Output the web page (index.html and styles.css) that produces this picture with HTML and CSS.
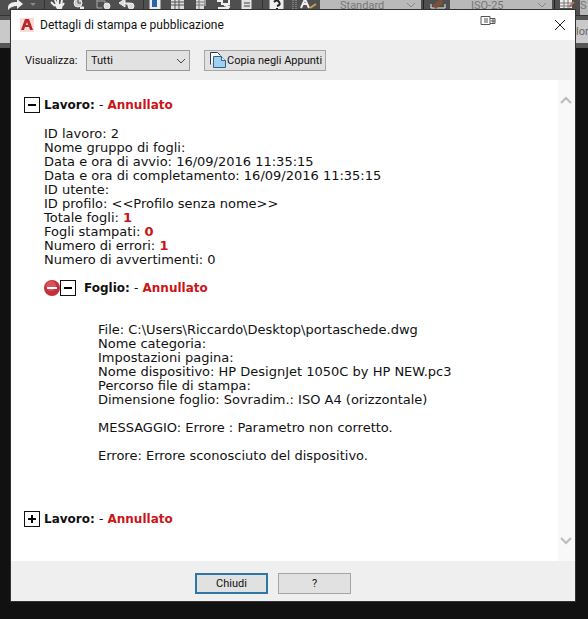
FILE: index.html
```
<!DOCTYPE html>
<html lang="it">
<head>
<meta charset="UTF-8">
<meta name="viewport" content="width=device-width, initial-scale=1.0">
<title>Dettagli di stampa e pubblicazione</title>
<link rel="stylesheet" href="styles.css">
</head>
<body>

<!-- CAD toolbars behind the dialog -->
<div class="toolbar">
    <svg class="tools" width="292" height="10" viewBox="0 0 292 10" fill="none" stroke="#eee">
        <path d="M8 8c0-5 4-6 9-6V-1l6 5-6 5V6c-4 0-6 1-9 4z" fill="#eee" stroke="none"/>
        <path d="M30 3h6l-3 3z" fill="#888" stroke="none"/>
        <path d="M44.500 0v10M143.500 0v10M262.500 0v10" stroke="#333"/>
        <path d="M51 2l4 4M55 0l2 5M58 0v5M62 0l-1 5M64 3l-2 3" stroke-width="2"/>
        <path d="M54 4h9l-1 5h-5z" fill="#eee" stroke="none"/>
        <circle cx="78" cy="3" r="4" fill="#ccc"/><path d="M78 0v3h3" stroke="#444"/><path d="M80 8h4" stroke-width="3"/>
        <path d="M97 0v8h5M97 1h8v4" stroke="#aaa"/><circle cx="107" cy="6" r="3" fill="#ddd"/>
        <path d="M119 3l6-4v8zM124 3h6v4" fill="#ddd"/><circle cx="131" cy="6" r="3" fill="#ddd"/>
        <path d="M150 0h10v9h-10z" fill="#eee"/><path d="M152 0h5v7h-5z" fill="#2868a8" stroke="none"/>
        <path d="M171 0h13v9h-13z" fill="#ddd" stroke="none"/><path d="M171 2h13M171 5h13M175 0v9M179 0v9" stroke="#555"/>
        <path d="M196 0h8v9h-8z" fill="#ddd" stroke="none"/><path d="M196 2h8M196 5h8M199 0v9" stroke="#777"/><path d="M205 0v6"/>
        <path d="M217 1h5v3h7V0M218 8h11M224 5l6 2" stroke-width="2"/>
        <path d="M242 0h9v9h-9z" fill="#ddd"/><path d="M244 3h6M244 6h6" stroke="#444"/>
        <path d="M270 0h13v9h-13z" fill="#eee"/><path d="M274 2q3-3 5 0t-2 4M277 8v1" stroke="#222" stroke-width="2"/>
    </svg>
    <div class="styles">
        <svg width="28" height="10" viewBox="0 0 28 10" fill="none">
            <path d="M1 0v10M4 0v10" stroke="#aaa" stroke-dasharray="1 1"/>
            <path d="M9 8l4-9 4 9M11 4h5" stroke="#eee" stroke-width="2"/>
            <path d="M18 8l6-4" stroke="#c9a050" stroke-width="2"/>
        </svg>
        <span class="style-box">Standard
            <svg width="10" height="6" viewBox="0 0 10 6"><path d="M1 1l4 4 4-4" fill="none" stroke="#888"/></svg>
        </span>
        <svg width="46" height="10" viewBox="0 0 46 10" fill="none">
            <path d="M2.500 0v10" stroke="#222"/>
            <path d="M10 4v4h14V4" stroke="#eee"/><path d="M13 7l8-6" stroke="#7d5038" stroke-width="5"/>
            <path d="M29 0h17v10H29z" fill="#b9b9b9"/>
        </svg>
        <span class="style-box iso">ISO-25
            <svg width="10" height="6" viewBox="0 0 10 6"><path d="M1 1l4 4 4-4" fill="none" stroke="#888"/></svg>
        </span>
        <svg width="28" height="10" viewBox="0 0 28 10" fill="none">
            <path d="M2.500 0v10" stroke="#222"/>
            <path d="M8 0h12v8H8z" fill="#eee"/><path d="M8 3h12M8 6h12M12 0v8M16 0v8" stroke="#777"/>
            <path d="M17 7l5-5" stroke="#b07050" stroke-width="2"/>
        </svg>
        <span class="style-box last">S</span>
    </div>
</div>
<div class="properties"><span>lore</span></div>

<main class="dialog">
    <header class="titlebar">
        <svg width="14" height="14" viewBox="0 0 14 14">
            <path d="M0 0h14v14H0z" fill="#f7dcda"/>
            <path d="M1 12L5 1h4l4 11h-3L9 9H5l-1 3zM6 7h2L7 4z" fill="#b8292b" fill-rule="evenodd"/>
        </svg>
        <h1>Dettagli di stampa e pubblicazione</h1>
        <svg class="device" width="16" height="10" viewBox="0 0 16 10" fill="none" stroke="#555">
            <path d="M1 .5h9v8H1zM10 2.500h5v5h-5M5 2v5M7 2v5M12 4v2h2V4z"/>
        </svg>
        <button class="close" aria-label="Chiudi finestra">
            <svg width="12" height="12" viewBox="0 0 12 12"><path d="M1 1l10 10M11 1L1 11" stroke="#222" fill="none"/></svg>
        </button>
    </header>

    <div class="options">
        <label for="filtro">Visualizza:</label>
        <div class="select">
            <select id="filtro"><option>Tutti</option></select>
            <svg width="10" height="6" viewBox="0 0 10 6"><path d="M1 1l4 4 4-4" fill="none" stroke="#444"/></svg>
        </div>
        <button class="btn copy">
            <svg width="17" height="17" viewBox="0 0 17 17">
                <path d="M1.500 12.500v-12h7l3 3" fill="#fff" stroke="#335" />
                <path d="M4.500 4.500h8l4 4v7h-12z" fill="#9fd0ee" stroke="#27648f"/>
                <path d="M12.500 4.500v4h4" fill="#e8f5fc" stroke="#27648f"/>
            </svg>
            Copia negli Appunti
        </button>
    </div>

    <div class="viewer">
        <div class="report">
            <h2>
                <button class="toggle" aria-label="Comprimi"><svg width="16" height="16" viewBox="0 0 16 16"><path d="M4 7h8v2H4z"/></svg></button>
                <span>Lavoro: <i>-</i> <b>Annullato</b></span>
            </h2>
            <div class="job">
                <p>ID lavoro: 2</p>
                <p>Nome gruppo di fogli:</p>
                <p>Data e ora di avvio: 16/09/2016 11:35:15</p>
                <p>Data e ora di completamento: 16/09/2016 11:35:15</p>
                <p>ID utente:</p>
                <p>ID profilo: &lt;&lt;Profilo senza nome&gt;&gt;</p>
                <p>Totale fogli: <b>1</b></p>
                <p>Fogli stampati: <b>0</b></p>
                <p>Numero di errori: <b>1</b></p>
                <p>Numero di avvertimenti: 0</p>

                <h3>
                    <svg width="16" height="16" viewBox="0 0 16 16">
                        <circle cx="8" cy="8" r="8" fill="#c3303a"/>
                        <circle cx="7" cy="6" r="5" fill="#d9525a"/>
                        <path d="M3 7h10v2H3z" fill="#fff"/>
                    </svg>
                    <button class="toggle" aria-label="Comprimi"><svg width="16" height="16" viewBox="0 0 16 16"><path d="M4 7h8v2H4z"/></svg></button>
                    <span>Foglio: <i>-</i> <b>Annullato</b></span>
                </h3>
                <div class="sheet">
                    <p>File: C:\Users\Riccardo\Desktop\portaschede.dwg</p>
                    <p>Nome categoria:</p>
                    <p>Impostazioni pagina:</p>
                    <p>Nome dispositivo: HP DesignJet 1050C by HP NEW.pc3</p>
                    <p>Percorso file di stampa:</p>
                    <p>Dimensione foglio: Sovradim.: ISO A4 (orizzontale)</p>
                    <p class="message">MESSAGGIO: Errore : Parametro non corretto.</p>
                    <p class="message">Errore: Errore sconosciuto del dispositivo.</p>
                </div>
            </div>
            <h2>
                <button class="toggle" aria-label="Espandi"><svg width="16" height="16" viewBox="0 0 16 16"><path d="M4 7h3V4h2v3h3v2H9v3H7V9H4z"/></svg></button>
                <span>Lavoro: <i>-</i> <b>Annullato</b></span>
            </h2>
        </div>
        <div class="scrollbar">
            <svg width="12" height="10" viewBox="0 0 12 10"><path d="M1 8l5-5 5 5" fill="none" stroke="#bbb" stroke-width="2"/></svg>
            <svg width="12" height="10" viewBox="0 0 12 10"><path d="M1 2l5 5 5-5" fill="none" stroke="#bbb" stroke-width="2"/></svg>
        </div>
    </div>

    <footer class="buttons">
        <button class="btn default">Chiudi</button>
        <button class="btn">?</button>
    </footer>
</main>

</body>
</html>
```
FILE: styles.css
```
* {
    box-sizing: border-box;
}

body {
    margin: 0;
    min-height: 100vh;
    background: #111;
    color: #111;
    font-family: Roboto, "Noto Sans", sans-serif;
    font-size: 11px;
}

h1, h2, h3, p {
    margin: 0;
}

h1, h2, h3 {
    font-size: 12px;
}

/* toolbars */
.toolbar {
    display: flex;
    height: 16px;
    background: #4f4f4f;
    border-bottom: 1px solid #333;
}

.toolbar svg {
    flex: none;
}

.styles {
    flex: 1;
    display: flex;
}

.style-box {
    flex: 1;
    display: flex;
    justify-content: space-between;
    padding: 0 5px 0 20px;
    background: #b9b9b9;
    color: #777;
    line-height: 12px;
}

.style-box.iso {
    padding-left: 4px;
}

.style-box svg {
    margin-top: 2px;
}

.style-box.last {
    flex: none;
    width: 8px;
    padding: 0;
}

.properties {
    display: flex;
    justify-content: flex-end;
    height: 32px;
    background: #c9c9c9;
    border-top: 4px solid #555;
    border-bottom: 5px solid #555;
    color: #666;
    line-height: 23px;
}

.properties span {
    width: 12px;
    overflow: hidden;
}

/* dialog */
.dialog {
    position: absolute;
    top: 10px;
    left: 11px;
    right: 13px;
    background: #efefef;
    outline: 1px solid #333;
}

.titlebar {
    display: flex;
    align-items: center;
    height: 30px;
    padding: 0 9px;
    background: #fff;
}

.titlebar h1 {
    flex: 1;
    margin-left: 6px;
    font-weight: normal;
}

.device {
    margin: 0 58px 8px 0;
}

.close {
    display: flex;
    padding: 0;
    border: 0;
    background: none;
}

.options {
    display: flex;
    align-items: center;
    height: 40px;
    padding: 0 14px;
}

.options label {
    width: 50px;
}

.select {
    position: relative;
    width: 104px;
    margin: 0 14px 0 11px;
}

.select select {
    display: block;
    width: 100%;
    height: 21px;
    padding: 0 4px;
    appearance: none;
    background: #e2e2e2;
    border: 1px solid #999;
    border-radius: 0;
    color: #111;
    font: inherit;
}

.select svg {
    position: absolute;
    top: 8px;
    right: 4px;
    pointer-events: none;
}

.btn {
    width: 73px;
    height: 21px;
    padding: 0;
    background: #e1e1e1;
    border: 1px solid #a5a5a5;
    color: #111;
    font: inherit;
}

.btn.copy {
    display: flex;
    align-items: center;
    gap: 1px;
    width: auto;
    padding: 0 3px 0 4px;
    white-space: nowrap;
}

.btn.default {
    border: 2px solid #2f75a8;
}

/* report */
.viewer {
    display: flex;
    background: #fff;
}

.report {
    flex: 1;
    padding: 17px 13px 34px;
    font-family: Verdana, "DejaVu Sans", sans-serif;
    font-size: 13px;
    line-height: 14px;
}

.report b {
    color: #cc1418;
}

.report i {
    font-style: normal;
    font-weight: normal;
}

h2, h3 {
    display: flex;
    align-items: center;
    line-height: 16px;
}

h2 span {
    margin-left: 4px;
}

.toggle {
    display: flex;
    width: 16px;
    height: 16px;
    padding: 0;
    border: 1px solid #111;
    background: #fff;
    align-items: center;
    justify-content: center;
}

.toggle svg {
    flex: none;
}

.job {
    padding: 14px 0 48px 20px;
}

h3 {
    margin-top: 13px;
}

h3 span {
    margin-left: 8px;
}

.sheet {
    padding: 27px 0 0 54px;
}

.message {
    margin-top: 14px;
}

.scrollbar {
    display: flex;
    flex-direction: column;
    justify-content: space-between;
    width: 17px;
    padding: 15px 2px;
    background: #f8f8f8;
}

.buttons {
    display: flex;
    justify-content: center;
    gap: 10px;
    padding: 12px 40px 7px 0;
}
```
